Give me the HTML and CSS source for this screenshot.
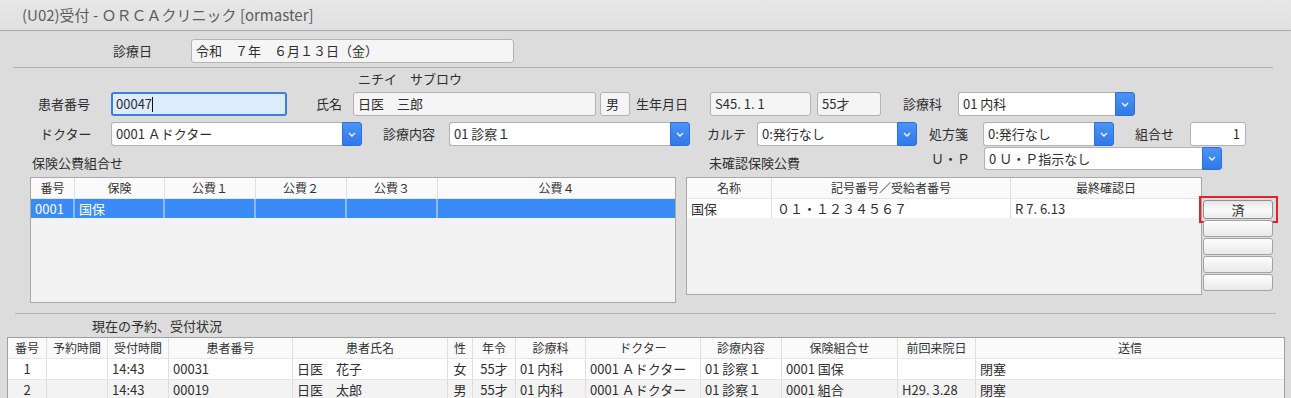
FILE: index.html
```html
<!DOCTYPE html>
<html lang="ja">
<head>
<meta charset="utf-8">
<title>受付</title>
<link rel="stylesheet" href="styles.css">
</head>
<body>
<div class="titlebar">(U02)受付 - ＯＲＣＡクリニック [ormaster]</div>

<div class="row row-date">
  <span class="lbl l-date">診療日</span>
  <div class="entry ro w-date">令和　７年　６月１３日（金）</div>
</div>

<div class="sep sep1"></div>

<div class="kana">ニチイ　サブロウ</div>

<div class="row row-pt">
  <span class="lbl l-ptno">患者番号</span>
  <div class="entry focus w-ptno">00047<span class="caret"></span></div>
  <span class="lbl l-name">氏名</span>
  <div class="entry ro w-name">日医　三郎</div>
  <div class="entry ro w-sex">男</div>
  <span class="lbl l-birth">生年月日</span>
  <div class="entry ro w-birth">S45. 1. 1</div>
  <div class="entry ro w-age">55才</div>
  <span class="lbl l-dept">診療科</span>
  <div class="combo w-dept"><div class="entry">01 内科</div><div class="cbtn"><svg width="8" height="5" viewBox="0 0 8 5"><path d="M1 1l3 3 3-3" fill="none" stroke="#fff" stroke-width="1.4"/></svg></div></div>
</div>

<div class="row row-dr">
  <span class="lbl l-dr">ドクター</span>
  <div class="combo w-dr"><div class="entry">0001 Ａドクター</div><div class="cbtn"><svg width="8" height="5" viewBox="0 0 8 5"><path d="M1 1l3 3 3-3" fill="none" stroke="#fff" stroke-width="1.4"/></svg></div></div>
  <span class="lbl l-naiyo">診療内容</span>
  <div class="combo w-naiyo"><div class="entry">01 診察１</div><div class="cbtn"><svg width="8" height="5" viewBox="0 0 8 5"><path d="M1 1l3 3 3-3" fill="none" stroke="#fff" stroke-width="1.4"/></svg></div></div>
  <span class="lbl l-karte">カルテ</span>
  <div class="combo w-karte"><div class="entry">0:発行なし</div><div class="cbtn"><svg width="8" height="5" viewBox="0 0 8 5"><path d="M1 1l3 3 3-3" fill="none" stroke="#fff" stroke-width="1.4"/></svg></div></div>
  <span class="lbl l-shoho">処方箋</span>
  <div class="combo w-shoho"><div class="entry">0:発行なし</div><div class="cbtn"><svg width="8" height="5" viewBox="0 0 8 5"><path d="M1 1l3 3 3-3" fill="none" stroke="#fff" stroke-width="1.4"/></svg></div></div>
  <span class="lbl l-kumi">組合せ</span>
  <div class="entry num w-kumi">1</div>
</div>

<div class="row row-up">
  <span class="lbl sub l-hoken">保険公費組合せ</span>
  <span class="lbl sub l-mikaku">未確認保険公費</span>
  <span class="lbl l-up">Ｕ・Ｐ</span>
  <div class="combo w-up"><div class="entry">0 Ｕ・Ｐ指示なし</div><div class="cbtn"><svg width="8" height="5" viewBox="0 0 8 5"><path d="M1 1l3 3 3-3" fill="none" stroke="#fff" stroke-width="1.4"/></svg></div></div>
</div>

<div class="tables">
  <div class="tbl tbl-hoken">
    <div class="grid g-hoken hdr">
      <div class="c">番号</div><div class="c">保険</div><div class="c">公費１</div><div class="c">公費２</div><div class="c">公費３</div><div class="c">公費４</div>
    </div>
    <div class="grid g-hoken trow sel">
      <div class="c">0001</div><div class="c">国保</div><div class="c"></div><div class="c"></div><div class="c"></div><div class="c"></div>
    </div>
  </div>

  <div class="tbl tbl-mikaku">
    <div class="grid g-mikaku hdr">
      <div class="c">名称</div><div class="c">記号番号／受給者番号</div><div class="c">最終確認日</div>
    </div>
    <div class="grid g-mikaku trow white">
      <div class="c">国保</div><div class="c wide">０１・１２３４５６７</div><div class="c">R 7. 6.13</div>
    </div>
  </div>

  <div class="btns">
    <div class="mark"><div class="pbtn done">済</div></div>
    <div class="pbtn"></div>
    <div class="pbtn"></div>
    <div class="pbtn"></div>
    <div class="pbtn"></div>
  </div>
</div>

<div class="sep sep2"></div>

<div class="row row-status">
  <span class="lbl l-status">現在の予約、受付状況</span>
</div>

<div class="tbl tbl-uke">
  <div class="grid g-uke hdr">
    <div class="c">番号</div><div class="c">予約時間</div><div class="c">受付時間</div><div class="c">患者番号</div><div class="c">患者氏名</div><div class="c">性</div><div class="c">年令</div><div class="c">診療科</div><div class="c">ドクター</div><div class="c">診療内容</div><div class="c">保険組合せ</div><div class="c">前回来院日</div><div class="c">送信</div>
  </div>
  <div class="grid g-uke urow white">
    <div class="c ctr">1</div><div class="c"></div><div class="c">14:43</div><div class="c">00031</div><div class="c">日医　花子</div><div class="c ctr">女</div><div class="c ctr">55才</div><div class="c">01 内科</div><div class="c">0001 Ａドクター</div><div class="c">01 診察１</div><div class="c">0001 国保</div><div class="c"></div><div class="c">閉塞</div>
  </div>
  <div class="grid g-uke urow alt">
    <div class="c ctr">2</div><div class="c"></div><div class="c">14:43</div><div class="c">00019</div><div class="c">日医　太郎</div><div class="c ctr">男</div><div class="c ctr">55才</div><div class="c">01 内科</div><div class="c">0001 Ａドクター</div><div class="c">01 診察１</div><div class="c">0001 組合</div><div class="c">H29. 3.28</div><div class="c">閉塞</div>
  </div>
</div>
</body>
</html>
```

FILE: styles.css
```css
* { box-sizing: border-box; margin: 0; padding: 0; }

body {
  margin: 0;
  width: 1291px;
  height: 398px;
  overflow: hidden;
  background: #dcdcdc;
  font-family: "Noto Sans CJK JP", "Noto Sans", sans-serif;
  font-size: 13px;
  color: #2e2e2e;
}

.titlebar {
  height: 31px;
  line-height: 30px;
  padding-left: 22px;
  font-size: 15px;
  color: #5c5c5c;
  background: linear-gradient(#e7e7e7, #e0e0e0);
  border-bottom: 1px solid #a9a9a9;
}

.row {
  display: flex;
  align-items: center;
  height: 24px;
}

.lbl { flex: none; white-space: nowrap; line-height: 14px; }

.entry {
  flex: none;
  height: 24px;
  border: 1px solid #b2b2b2;
  border-radius: 3px;
  background: #fff;
  padding-left: 4px;
  line-height: 22px;
  white-space: nowrap;
  overflow: hidden;
}
.ro { background: #f5f5f5; }
.focus {
  border: 2px solid #3c7fdd;
  background: #dcecfb;
  padding-left: 3px;
  line-height: 20px;
}
.caret {
  display: inline-block;
  width: 1px;
  height: 15px;
  background: #111;
  vertical-align: -3px;
}
.num { text-align: right; padding-right: 5px; }

.combo { flex: none; display: flex; height: 24px; }
.combo .entry {
  flex: 1;
  height: 100%;
  border-right: none;
  border-radius: 3px 0 0 3px;
}
.cbtn {
  flex: none;
  width: 20px;
  height: 100%;
  display: flex;
  align-items: center;
  justify-content: center;
  background: linear-gradient(#4b93f7, #2f79ea);
  border: 1px solid #2d70d8;
  border-radius: 0 3px 3px 0;
}

/* date row */
.row-date { margin-top: 8px; }
.l-date { margin-left: 113px; width: 78px; }
.w-date { width: 323px; }

.sep { height: 1px; background: #b3b3b3; }
.sep1 { margin: 4px 0 0 13px; width: 1260px; }
.sep2 { margin: 10px 0 0 15px; width: 1261px; }

.kana {
  margin: 4px 0 0 358px;
  height: 14px;
  line-height: 14px;
  white-space: nowrap;
}

/* patient row */
.row-pt { margin-top: 6px; }
.l-ptno { margin-left: 38px; width: 73px; }
.w-ptno { width: 176px; }
.l-name { margin-left: 29px; width: 37px; }
.w-name { width: 243px; }
.w-sex { margin-left: 4px; width: 30px; padding-left: 5px; }
.l-birth { margin-left: 6px; width: 74px; }
.w-birth { width: 101px; }
.w-age { margin-left: 6px; width: 64px; }
.l-dept { margin-left: 22px; width: 55px; }
.w-dept { width: 177px; }

/* doctor row */
.row-dr { margin-top: 6px; }
.l-dr { margin-left: 40px; width: 71px; }
.w-dr { width: 251px; }
.l-naiyo { margin-left: 21px; width: 66px; }
.w-naiyo { width: 241px; }
.l-karte { margin-left: 17px; width: 50px; }
.w-karte { width: 160px; }
.l-shoho { margin-left: 12px; width: 54px; }
.w-shoho { width: 131px; }
.l-kumi { margin-left: 21px; width: 55px; }
.w-kumi { width: 56px; }

/* U.P row */
.row-up { margin-top: 1px; height: 23px; }
.row-up .combo { height: 23px; }
.sub { align-self: flex-end; }
.l-hoken { margin-left: 32px; width: 677px; }
.l-mikaku { width: 222px; }
.l-up { width: 53px; }
.w-up { width: 238px; }

/* tables */
.tables {
  display: flex;
  align-items: flex-start;
  margin: 7px 0 0 30px;
  height: 126px;
}
.tbl {
  flex: none;
  border: 1px solid #a8a8a8;
  background: #f2f2f2;
  overflow: hidden;
}
.tbl-hoken { width: 646px; height: 126px; }
.tbl-mikaku { margin-left: 10px; width: 516px; height: 118px; }

.grid { display: grid; }
.g-hoken { grid-template-columns: 44px 90px 91px 91px 91px 1fr; }
.g-mikaku { grid-template-columns: 85px 239px 1fr; }
.g-uke { grid-template-columns: 39px 61px 61px 124px 155px 25px 43px 70px 115px 81px 116px 78px 1fr; }

.c {
  white-space: nowrap;
  overflow: hidden;
  padding-left: 4px;
  border-right: 1px solid #dedede;
}
.c:last-child { border-right: none; }

.hdr {
  height: 21px;
  background: #fafafa;
  border-bottom: 1px solid #e6e6e6;
}
.hdr .c {
  font-size: 12px;
  line-height: 20px;
  text-align: center;
  padding-left: 0;
  color: #333;
}

.trow { height: 19px; }
.trow .c { line-height: 19px; }
.sel { background: #3b8bf6; color: #fff; }
.sel .c { border-right: 2px solid #8cb9f6; }
.sel .c:last-child { border-right: none; }
.white { background: #fff; }
.white .c.wide { padding-left: 5px; }

.btns {
  flex: none;
  margin-left: 1px;
  width: 70px;
  padding-top: 23px;
  display: flex;
  flex-direction: column;
  gap: 1px;
}
.pbtn {
  height: 17px;
  border: 1px solid #a3a3a3;
  border-radius: 3px;
  background: linear-gradient(#fdfdfd, #e9e9e9);
  text-align: center;
  font-size: 13px;
  line-height: 15px;
}
.mark {
  margin: -4px -5px -4px -4px;
  padding: 2px 3px 2px 2px;
  border: 2px solid #e4212b;
}
.done {
  height: 19px;
  line-height: 17px;
  background: linear-gradient(#e6e6e6, #fafafa 55%, #ebebeb);
  border-color: #8f8f8f;
}

/* status */
.row-status { height: 23px; }
.l-status { margin-left: 92px; }

.tbl-uke {
  margin-left: 7px;
  width: 1278px;
  height: 70px;
  background: #fff;
  border-color: #a0a0a0;
}
.urow { height: 20px; }
.urow .c { line-height: 20px; }
.alt { background: #f3f3f3; border-top: 1px solid #e4e4e4; }
.ctr { text-align: center; padding-left: 0; }
```
